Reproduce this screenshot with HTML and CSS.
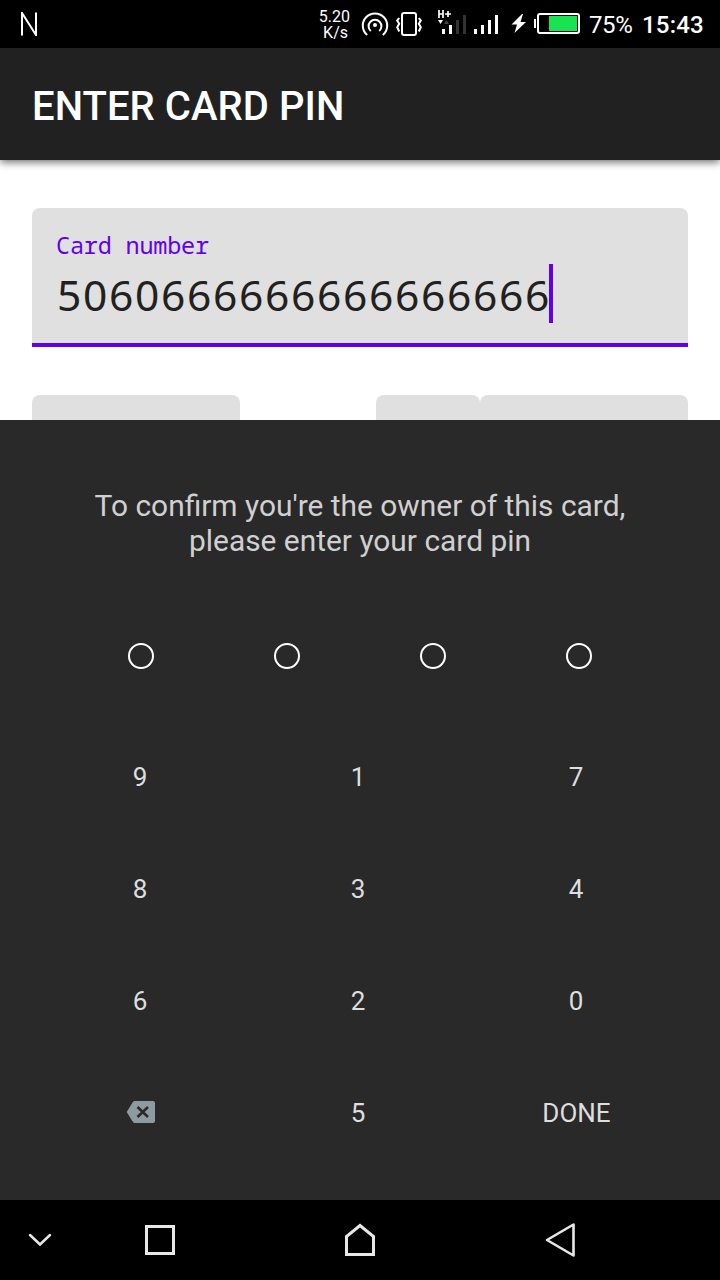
FILE: index.html
```html
<!DOCTYPE html>
<html lang="en">
<head>
<meta charset="utf-8">
<title>Enter card pin</title>
<link rel="stylesheet" href="styles.css">
</head>
<body>
<div class="screen">
  <header class="status">
    <svg class="n-icon" width="18" height="24" viewBox="0 0 18 24"><path d="M2 23.5V1L16 23V.5" fill="none" stroke="#fff" stroke-width="2"/></svg>
    <div class="speed">5.20<br><span class="unit">K/s</span></div>
    <svg class="status-icons" width="220" height="48" viewBox="360 0 220 48">
      <g fill="none" stroke="#fff" stroke-width="2">
        <path d="M367.2 35A12.2 12.2 0 1 1 382.8 35"/>
        <path d="M370.8 31A6.4 6.4 0 1 1 379.2 31"/>
        <rect x="402" y="13" width="14" height="22" rx="2"/>
        <path d="M399.2 18l-2 2.6 2 3.2-2 3.4 2 4.3M418.8 18l2 2.6-2 3.2 2 3.4-2 4.3"/>
      </g>
      <circle cx="375" cy="25" r="2" fill="#fff"/>
      <path d="M439 10v8M443 10v8M439 14h4M445 14h6M448 11v6" fill="none" stroke="#fff" stroke-width="1.700"/>
      <path d="M438 20h5l-2.5 4z" fill="#fff"/>
      <path d="M444 24h5l-2.5-4z" fill="#444"/>
      <path d="M442 29h3v5h-3zM449 25h3v9h-3z" fill="#fff"/>
      <path d="M456 20h3v14h-3zM463 15h3v19h-3z" fill="#333"/>
      <path d="M474 29h3v5h-3zM481 25h3v9h-3zM488 20h3v14h-3zM495 15h3v19h-3z" fill="#fff"/>
      <path d="M522 14l-10.5 10.5h5.5L514.500 33 526 22h-5.500l2.500-8z" fill="#fff"/>
      <path d="M534 19h2v9h-2z" fill="#fff"/>
      <rect x="538" y="14" width="41" height="19" rx="2" fill="none" stroke="#fff" stroke-width="2"/>
      <path d="M549 16h28v15h-28z" fill="#18e452"/>
    </svg>
    <span class="percent">75%</span>
    <span class="clock">15:43</span>
  </header>
  <div class="toolbar"><h1>ENTER CARD PIN</h1></div>
  <main class="form">
    <div class="field">
      <label class="field-label">Card number</label>
      <div class="field-value"><span class="digits">5060666666666666666</span><i class="caret"></i></div>
    </div>
    <div class="field-row">
      <div class="stub stub-wide"></div>
      <div class="stub stub-narrow"></div>
      <div class="stub stub-wide"></div>
    </div>
  </main>
  <section class="sheet">
    <p class="message">To confirm you're the owner of this card,<br>please enter your card pin</p>
    <div class="dots"><i></i><i></i><i></i><i></i></div>
    <div class="keypad">
      <button>9</button><button>1</button><button>7</button>
      <button>8</button><button>3</button><button>4</button>
      <button>6</button><button>2</button><button>0</button>
      <button class="delete" aria-label="Delete"><svg width="30" height="24" viewBox="0 0 30 24"><path d="M9 1h18q2 0 2 2v18q0 2-2 2H9q-1.400 0-2.200-1.200L.7 12l6.100-9.800Q7.600 1 9 1z" fill="#8d9a9f"/><path d="M11.500 7l10.500 10M22 7l-10.500 10" stroke="#292929" stroke-width="2.600"/></svg></button>
      <button>5</button><button class="done">DONE</button>
    </div>
  </section>
  <nav class="navbar">
    <svg width="720" height="80" viewBox="0 1200 720 80" fill="none" stroke="#e8e8e8">
      <path d="M30 1235l10 9.500 10-9.500" stroke-width="2.500" stroke-linecap="round"/>
      <path d="M146.500 1226.500h27v27h-27z" stroke-width="3"/>
      <path d="M346.500 1254.500v-18L360 1225.500l13.500 11v18z" stroke-width="3"/>
      <path d="M573.500 1224.500v31L547 1240z" stroke-width="2.600" stroke-linejoin="round"/>
    </svg>
  </nav>
</div>
</body>
</html>
```
FILE: styles.css
```css
* { box-sizing: border-box; }
body { margin: 0; font-family: Roboto, sans-serif; background: #fff; }
.screen { width: 720px; height: 1280px; display: flex; flex-direction: column; overflow: hidden; }
.status { height: 48px; flex: none; background: #000; color: #fff; display: flex; align-items: center; padding-left: 20px; }
.n-icon { flex: none; }
.speed { width: 54px; margin-left: 258px; padding-top: 1px; text-align: right; font-size: 16px; line-height: 16px; }
.unit { padding-right: 2px; }
.status-icons { flex: none; margin-left: 10px; }
.percent { font-size: 24px; letter-spacing: -.4px; margin-left: 9px; width: 53px; padding-top: 2px; }
.clock { font-size: 24px; font-weight: 500; letter-spacing: .2px; padding-top: 2px; }
.toolbar { height: 112px; flex: none; background: #212121; display: flex; align-items: center; padding: 5px 32px 0; box-shadow: 0 2px 8px rgba(0, 0, 0, .6); z-index: 1; }
.toolbar h1 { margin: 0; color: #fff; font-size: 40px; font-weight: 500; line-height: 47px; letter-spacing: .06px; white-space: nowrap; }
.form { height: 260px; flex: none; padding: 48px 32px 0; overflow: hidden; }
.field { height: 139px; background: #e0e0e0; border-bottom: 4px solid #6200ee; border-radius: 8px 8px 0 0; padding: 23px 24px 0; display: flex; flex-direction: column; }
.field-label { font: 23.500px/28px "Noto Sans Mono", "DejaVu Sans Mono", monospace; letter-spacing: -.2px; color: #6200ee; }
.field-value { margin-top: 5px; height: 59px; display: flex; align-items: center; color: #212121; }
.digits { width: 493px; padding: 2px 0 0 1px; font: 42.500px/59px "Noto Sans", sans-serif; letter-spacing: 1.690px; white-space: nowrap; }
.caret { width: 4px; height: 59px; background: #6200ee; }
.field-row { display: flex; margin-top: 48px; }
.stub { height: 80px; background: #e0e0e0; border-radius: 8px 8px 0 0; }
.stub-wide { width: 208px; }
.stub-narrow { width: 104px; margin-left: 136px; }
.sheet { height: 780px; flex: none; background: #292929; padding-top: 68px; color: #d0d0d0; z-index: 1; }
.message { margin: 0; text-align: center; font-size: 29.900px; line-height: 35px; }
.dots { display: flex; justify-content: space-between; padding: 0 128px; margin-top: 85px; }
.dots i { width: 26px; height: 26px; border: 2px solid #fff; border-radius: 50%; }
.keypad { display: grid; grid-template-columns: repeat(3, 218px); grid-auto-rows: 112px; margin: 52px 0 0 31px; }
.keypad button { border: 0; padding: 0; background: none; color: #dedede; font: 26px Roboto, sans-serif; display: flex; align-items: center; justify-content: center; }
.keypad .delete { padding: 0 0 2px 2px; }
.keypad .done { padding-left: 1px; }
.navbar { height: 80px; flex: none; background: #000; }
.navbar svg { display: block; }
```
